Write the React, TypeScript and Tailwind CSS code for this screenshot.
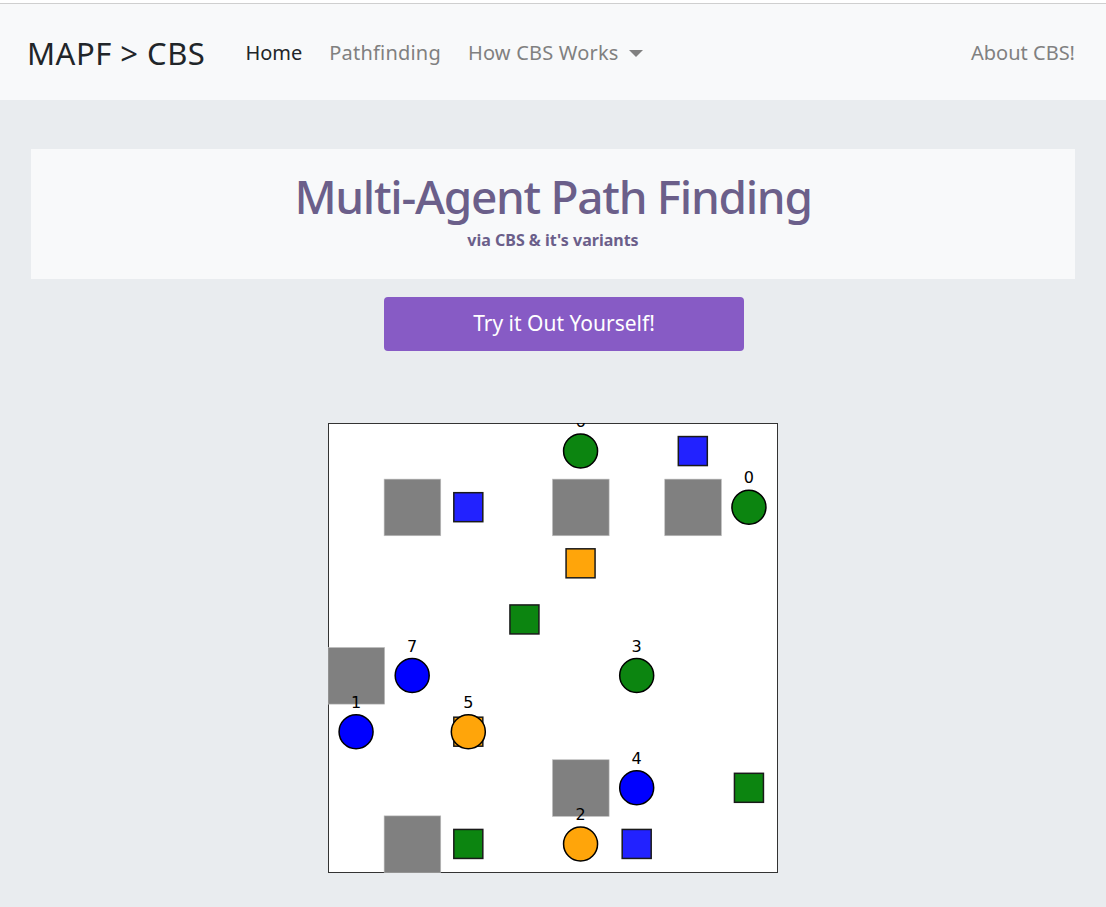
const CELL = 449 / 8;

// obstacles, goals and agents as [col, row]
const obstacles = [
	[1, 1],
	[4, 1],
	[6, 1],
	[0, 4],
	[4, 6],
	[1, 7],
];

const goals = [
	{ pos: [6, 0], color: "#2222ff" },
	{ pos: [2, 1], color: "#2222ff" },
	{ pos: [4, 2], color: "#ffa50a" },
	{ pos: [3, 3], color: "#0c8510" },
	{ pos: [2, 5], color: "#ffa50a" },
	{ pos: [7, 6], color: "#0c8510" },
	{ pos: [2, 7], color: "#0c8510" },
	{ pos: [5, 7], color: "#2222ff" },
];

const agents = [
	{ id: 6, pos: [4, 0], color: "#0c8510" },
	{ id: 0, pos: [7, 1], color: "#0c8510" },
	{ id: 7, pos: [1, 4], color: "#0000ff" },
	{ id: 3, pos: [5, 4], color: "#0c8510" },
	{ id: 1, pos: [0, 5], color: "#0000ff" },
	{ id: 5, pos: [2, 5], color: "#ffa50a" },
	{ id: 4, pos: [5, 6], color: "#0000ff" },
	{ id: 2, pos: [4, 7], color: "#ffa50a" },
];

const GridAnimation = () => {
	const cx = (c: number) => c * CELL + CELL / 2;

	return (
		<svg width="450" height="450" viewBox="0 0 450 450" className="block overflow-hidden">
			<rect x="0.5" y="0.5" width="449" height="449" fill="#ffffff" stroke="#333333" strokeWidth="1" />
			{obstacles.map(([c, r], i) => (
				<rect key={i} x={c * CELL} y={r * CELL} width={CELL + 0.5} height={CELL + 0.5} fill="#808080" stroke="#bdbdbd" strokeWidth="0.6" />
			))}
			{goals.map((g, i) => (
				<rect
					key={i}
					x={cx(g.pos[0]) - 14.5}
					y={cx(g.pos[1]) - 14.5}
					width="29"
					height="29"
					fill={g.color}
					stroke="#1a1a1a"
					strokeWidth="1.5"
				/>
			))}
			{agents.map((a) => (
				<g key={a.id}>
					<circle cx={cx(a.pos[0])} cy={cx(a.pos[1])} r="17" fill={a.color} stroke="#000000" strokeWidth="1.5" />
					<text
						x={cx(a.pos[0])}
						y={cx(a.pos[1]) - 24}
						textAnchor="middle"
						fontSize="16"
						fontFamily="'DejaVu Sans', sans-serif"
						fill="#000000"
					>
						{a.id}
					</text>
				</g>
			))}
		</svg>
	);
};

const App = () => {
	const navItems = [
		{ label: "Home", active: true },
		{ label: "Pathfinding", active: false },
		{ label: "How CBS Works", active: false, dropdown: true },
	];

	return (
		<div className="min-h-[907px] bg-[#e9ecef] font-['Noto_Sans',sans-serif]">
			<div className="h-[3px] bg-white" />
			<nav className="bg-[#f8f9fa] border-t border-[#cfcfcf]">
				<div className="flex items-center justify-between h-[96px] pl-[27px] pr-[31px] pt-[2px]">
					<div className="flex items-center">
						<a href="#" className="text-[31px] font-normal text-[#212529] mr-[40px] tracking-[0.5px]">
							MAPF &gt; CBS
						</a>
						<div className="flex items-center gap-[27px]">
							{navItems.map((item, index) => (
								<a
									key={index}
									href="#"
									className={
										item.active
											? "text-[20px] text-[#212529] flex items-center"
											: "text-[20px] text-[#808080] flex items-center tracking-[0.2px]"
									}
								>
									{item.label}
									{item.dropdown && (
										<span className="ml-[10px] inline-block w-0 h-0 border-l-[7px] border-r-[7px] border-t-[7px] border-l-transparent border-r-transparent border-t-[#808080]" />
									)}
								</a>
							))}
						</div>
					</div>
					<a href="#" className="text-[20px] text-[#808080]">
						About CBS!
					</a>
				</div>
			</nav>

			<div className="px-[31px] pt-[49px]">
				<div className="bg-[#f8f9fa] h-[130px] flex flex-col items-center pt-[16px]">
					<h1 className="text-[46px] leading-[62px] font-medium tracking-[-1.3px] text-[#6b5f8a]">
						Multi-Agent Path Finding
					</h1>
					<p className="text-[16px] font-bold text-[#6b5f8a] leading-[22px] mt-[2px]">via CBS &amp; it's variants</p>
				</div>
				<div className="flex justify-center mt-[18px] pl-[22px]">
					<button className="w-[360px] h-[54px] rounded-[4px] bg-[#875bc5] text-white text-[21px]">
						Try it Out Yourself!
					</button>
				</div>
				<div className="flex justify-center mt-[72px]">
					<GridAnimation />
				</div>
			</div>
		</div>
	);
};

export default App;
